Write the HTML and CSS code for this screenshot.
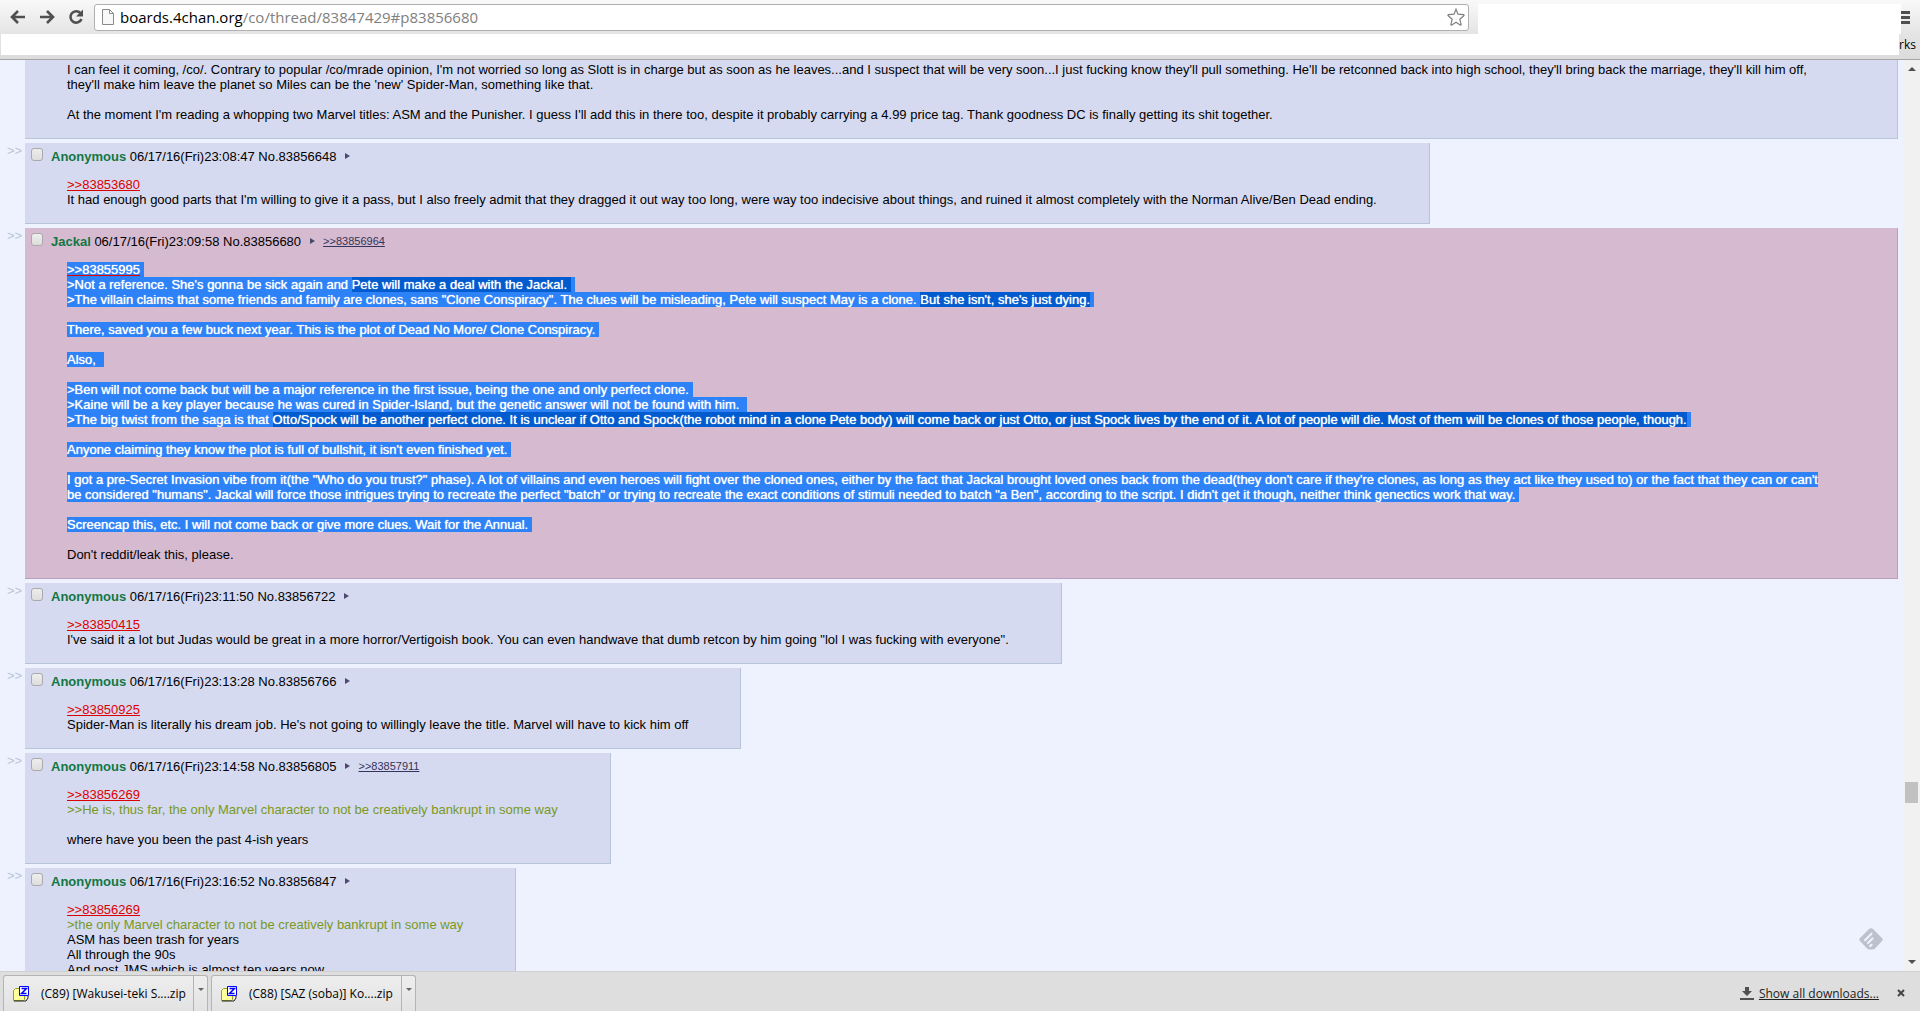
FILE: index.html
```html
<!DOCTYPE html>
<html lang="en">
  <head>
    <meta charset="UTF-8" />
    <meta name="viewport" content="width=device-width, initial-scale=1.0" />
    <title>/co/ - Thread 83847429</title>
    <link rel="stylesheet" href="styles.css">
  </head>
  <body>
    <header class="browser">
      <div class="toolbar">
        <button class="nav" aria-label="Back">
          <svg width="16" height="14" viewBox="0 0 16 14"><path d="M8 1 2 7l6 6M2.500 7H15" fill="none" stroke="#505050" stroke-width="2.600" /></svg>
        </button>
        <button class="nav" aria-label="Forward">
          <svg width="16" height="14" viewBox="0 0 16 14"><path d="M8 1l6 6-6 6M13.500 7H1" fill="none" stroke="#505050" stroke-width="2.600" /></svg>
        </button>
        <button class="nav" aria-label="Reload">
          <svg width="16" height="16" viewBox="0 0 16 16"><path d="M12.500 4.200A5.700 5.700 0 1 0 13.500 10" fill="none" stroke="#505050" stroke-width="2.600" /><path d="M15 .5v7H8z" fill="#505050" /></svg>
        </button>
        <div class="address">
          <svg width="12" height="16" viewBox="0 0 12 16"><path d="M.5.5h7l4 4v11H.5zM7.500.5v4h4" fill="#f8f8f8" stroke="#8a8a8a" /></svg>
          <a class="url" href="#p83856680">boards.4chan.org<span>/co/thread/83847429#p83856680</span></a>
          <button class="star" aria-label="Bookmark">
            <svg width="18" height="18" viewBox="0 0 18 18"><path d="M9 1.200l2 5 5.400.5c.7.1.9.6.4 1.100l-4 3.500 1.300 5c.1.600-.3.900-.9.600L9 14.200 4.800 16.900c-.6.3-1 0-.9-.6l1.300-5-4-3.500c-.5-.5-.3-1 .4-1.100L7 6.200z" fill="#fff" stroke="#808080" stroke-width="1.200" /></svg>
          </button>
        </div>
        <div class="blank"></div>
        <button class="menu" aria-label="Menu"><i></i><i></i><i></i></button>
      </div>
      <div class="bookmarks">
        <div class="blank"></div>
        <span>rks</span>
      </div>
    </header>

    <div class="view">
      <main class="thread">
        <div class="row">
          <span class="arrows"></span>
          <article class="post wide cut">
            <blockquote>
              I can feel it coming, /co/. Contrary to popular /co/mrade opinion, I'm not worried so long as Slott is in charge but as soon as he leaves...and I suspect that will be very soon...I just fucking know they'll pull something. He'll be retconned back into high school, they'll bring back the marriage, they'll kill him off,<br>
              they'll make him leave the planet so Miles can be the 'new' Spider-Man, something like that.<br><br>
              At the moment I'm reading a whopping two Marvel titles: ASM and the Punisher. I guess I'll add this in there too, despite it probably carrying a 4.99 price tag. Thank goodness DC is finally getting its shit together.
            </blockquote>
          </article>
        </div>

        <div class="row">
          <span class="arrows">&gt;&gt;</span>
          <article class="post">
            <div class="info">
              <input type="checkbox" id="c83856648" />
              <label for="c83856648"><b>Anonymous</b> 06/17/16(Fri)23:08:47 No.83856648</label>
              <button class="tri" aria-label="Post menu"></button>
            </div>
            <blockquote>
              <a href="#p83853680">&gt;&gt;83853680</a><br>
              It had enough good parts that I'm willing to give it a pass, but I also freely admit that they dragged it out way too long, were way too indecisive about things, and ruined it almost completely with the Norman Alive/Ben Dead ending.
            </blockquote>
          </article>
        </div>

        <div class="row">
          <span class="arrows">&gt;&gt;</span>
          <article class="post wide highlight" id="p83856680">
            <div class="info">
              <input type="checkbox" id="c83856680" />
              <label for="c83856680"><b>Jackal</b> 06/17/16(Fri)23:09:58 No.83856680</label>
              <button class="tri" aria-label="Post menu"></button>
              <a class="backlink" href="#p83856964">&gt;&gt;83856964</a>
            </div>
            <blockquote>
              <mark><a href="#p83855995">&gt;&gt;83855995</a></mark><br>
              <mark>&gt;Not a reference. She's gonna be sick again and <em>Pete will make a deal with the Jackal.&nbsp;</em></mark><br>
              <mark>&gt;The villain claims that some friends and family are clones, sans "Clone Conspiracy". The clues will be misleading, Pete will suspect May is a clone. <em>But she isn't, she's just dying.</em></mark><br><br>
              <mark>There, saved you a few buck next year. This is the plot of Dead No More/ Clone Conspiracy.</mark><br><br>
              <mark>Also,&nbsp;</mark><br><br>
              <mark>&gt;Ben will not come back but will be a major reference in the first issue, being the one and only perfect clone.</mark><br>
              <mark>&gt;Kaine will be a key player because he was cured in Spider-Island, but the genetic answer will not be found with him.&nbsp;</mark><br>
              <mark>&gt;The big twist from the saga is that <em>Otto/Spock will be another perfect clone. It is unclear if Otto and Spock(the robot mind in a clone Pete body) will come back or just Otto, or just Spock lives by the end of it. A lot of people will die. Most of them will be clones of those people, though.</em></mark><br><br>
              <mark>Anyone claiming they know the plot is full of bullshit, it isn't even finished yet.</mark><br><br>
              <mark>I got a pre-Secret Invasion vibe from it(the "Who do you trust?" phase). A lot of villains and even heroes will fight over the cloned ones, either by the fact that Jackal brought loved ones back from the dead(they don't care if they're clones, as long as they act like they used to) or the fact that they can or can't<br>
              be considered "humans". Jackal will force those intrigues trying to recreate the perfect "batch" or trying to recreate the exact conditions of stimuli needed to batch "a Ben", according to the script. I didn't get it though, neither think genectics work that way.</mark><br><br>
              <mark>Screencap this, etc. I will not come back or give more clues. Wait for the Annual.</mark><br><br>
              Don't reddit/leak this, please.
            </blockquote>
          </article>
        </div>

        <div class="row">
          <span class="arrows">&gt;&gt;</span>
          <article class="post">
            <div class="info">
              <input type="checkbox" id="c83856722" />
              <label for="c83856722"><b>Anonymous</b> 06/17/16(Fri)23:11:50 No.83856722</label>
              <button class="tri" aria-label="Post menu"></button>
            </div>
            <blockquote>
              <a href="#p83850415">&gt;&gt;83850415</a><br>
              I've said it a lot but Judas would be great in a more horror/Vertigoish book. You can even handwave that dumb retcon by him going "lol I was fucking with everyone".
            </blockquote>
          </article>
        </div>

        <div class="row">
          <span class="arrows">&gt;&gt;</span>
          <article class="post">
            <div class="info">
              <input type="checkbox" id="c83856766" />
              <label for="c83856766"><b>Anonymous</b> 06/17/16(Fri)23:13:28 No.83856766</label>
              <button class="tri" aria-label="Post menu"></button>
            </div>
            <blockquote>
              <a href="#p83850925">&gt;&gt;83850925</a><br>
              Spider-Man is literally his dream job. He's not going to willingly leave the title. Marvel will have to kick him off
            </blockquote>
          </article>
        </div>

        <div class="row">
          <span class="arrows">&gt;&gt;</span>
          <article class="post">
            <div class="info">
              <input type="checkbox" id="c83856805" />
              <label for="c83856805"><b>Anonymous</b> 06/17/16(Fri)23:14:58 No.83856805</label>
              <button class="tri" aria-label="Post menu"></button>
              <a class="backlink" href="#p83857911">&gt;&gt;83857911</a>
            </div>
            <blockquote>
              <a href="#p83856269">&gt;&gt;83856269</a><br>
              <span class="quote">&gt;&gt;He is, thus far, the only Marvel character to not be creatively bankrupt in some way</span><br><br>
              where have you been the past 4-ish years
            </blockquote>
          </article>
        </div>

        <div class="row">
          <span class="arrows">&gt;&gt;</span>
          <article class="post">
            <div class="info">
              <input type="checkbox" id="c83856847" />
              <label for="c83856847"><b>Anonymous</b> 06/17/16(Fri)23:16:52 No.83856847</label>
              <button class="tri" aria-label="Post menu"></button>
            </div>
            <blockquote>
              <a href="#p83856269">&gt;&gt;83856269</a><br>
              <span class="quote">&gt;the only Marvel character to not be creatively bankrupt in some way</span><br>
              ASM has been trash for years<br>
              All through the 90s<br>
              And post JMS which is almost ten years now
            </blockquote>
          </article>
        </div>
      </main>

      <div class="scrollbar">
        <button class="up" aria-label="Scroll up"></button>
        <div class="track"><div class="thumb"></div></div>
        <button class="down" aria-label="Scroll down"></button>
      </div>

      <button class="feedly" aria-label="Feedly">
        <svg width="24" height="22" viewBox="0 0 24 22"><path d="M10 1q2-1.600 4 0l9 9q1.500 1.500 0 3l-7 7.500q-1 1-2.500 1h-3q-1.500 0-2.500-1L1 13q-1.500-1.500 0-3z" fill="#bdc0cd" /><path d="M6 12.200l6.500-6.500M9 15l4.500-4.500M11.300 18l1.200-1.200" stroke="#eef2ff" stroke-width="2.200" stroke-linecap="round" /></svg>
      </button>
    </div>

    <footer class="downloads">
      <div class="item">
        <button class="file">
          <svg width="17" height="16" viewBox="0 0 17 16"><path d="M.5 4.500l2-2h4v2h5v9l-1 1H.5z" fill="#ffff9c" stroke="#9c9c31" /><path d="M1 15h12l2-3v-2" fill="none" stroke="#222" /><path d="M6.500.5h9v9h-9z" fill="#fff" stroke="#00f" /><path d="M8.500 2.500h5l-5 5h5" fill="none" stroke="#00f" stroke-width="1.500" /></svg>
          (C89) [Wakusei-teki S....zip
        </button>
        <button class="more" aria-label="Options"></button>
      </div>
      <div class="item">
        <button class="file">
          <svg width="17" height="16" viewBox="0 0 17 16"><path d="M.5 4.500l2-2h4v2h5v9l-1 1H.5z" fill="#ffff9c" stroke="#9c9c31" /><path d="M1 15h12l2-3v-2" fill="none" stroke="#222" /><path d="M6.500.5h9v9h-9z" fill="#fff" stroke="#00f" /><path d="M8.500 2.500h5l-5 5h5" fill="none" stroke="#00f" stroke-width="1.500" /></svg>
          (C88) [SAZ (soba)] Ko....zip
        </button>
        <button class="more" aria-label="Options"></button>
      </div>
      <div class="all">
        <svg width="14" height="13" viewBox="0 0 14 13"><path d="M5 0h4v4h3L7 9 2 4h3zM0 11h14v2H0z" fill="#505050" /></svg>
        <a href="#downloads">Show all downloads...</a>
        <button class="close" aria-label="Close">
          <svg width="8" height="8" viewBox="0 0 8 8"><path d="M1 1l6 6M7 1 1 7" stroke="#444" stroke-width="2" /></svg>
        </button>
      </div>
    </footer>
  </body>
</html>
```
FILE: styles.css
```css
* {
  box-sizing: border-box;
}
body {
  margin: 0;
  height: 100vh;
  display: flex;
  flex-direction: column;
  overflow: hidden;
  background-color: #eef2ff;
  font-family: "Liberation Sans", Arial, sans-serif;
  font-size: 13px;
  line-height: 15px;
  color: #000;
}
button {
  padding: 0;
  border: 0;
  background: none;
  font: inherit;
  color: inherit;
}
svg {
  display: block;
  flex: none;
}

/* browser chrome */
.browser {
  flex: none;
  height: 60px;
  background: linear-gradient(#f9f9f9, #e4e4e4 34px, #dcdcdc);
  border-bottom: 1px solid #a5a5a5;
  font-family: "Open Sans", "Noto Sans", sans-serif;
}
.toolbar {
  display: flex;
  align-items: center;
  height: 34px;
  padding-left: 10px;
}
.nav {
  width: 16px;
  margin-right: 13px;
}
.address {
  flex: 1;
  display: flex;
  align-items: center;
  height: 27px;
  margin: 0 9px 0 -3px;
  padding: 0 3px 0 7px;
  background-color: #fff;
  border: 1px solid #b0b0b0;
  border-radius: 3px;
}
.url {
  flex: 1;
  margin-left: 6px;
  font-size: 15px;
  color: #000;
  text-decoration: none;
}
.url span {
  color: #808080;
}
.blank {
  background-color: #fff;
}
.toolbar .blank {
  width: 423px;
  height: 30px;
  align-self: flex-end;
}
.menu {
  width: 19px;
}
.menu i {
  display: block;
  width: 9px;
  height: 3px;
  margin: 2px 0;
  background-color: #505050;
}
.bookmarks {
  display: flex;
  height: 21px;
  padding-left: 1px;
  font-size: 12px;
  line-height: 21px;
}
.bookmarks .blank {
  flex: 1;
}
.bookmarks span {
  width: 21px;
}

/* thread */
.view {
  position: relative;
  flex: 1;
  min-height: 0;
  display: flex;
}
.thread {
  flex: 1;
  overflow: hidden;
}
.row {
  display: flex;
  align-items: flex-start;
  margin-bottom: 4px;
  padding-right: 5px;
}
.arrows {
  flex: none;
  width: 25px;
  padding-left: 7px;
  color: #b7c5d9;
}
.post {
  padding: 2px;
  background-color: #d6daf0;
  border: 1px solid #b7c5d9;
  border-width: 0 1px 1px 0;
}
.wide {
  flex: 1;
}
.highlight {
  background-color: #d6bad0;
  border-color: #ba9dbf;
}
.info {
  display: flex;
  align-items: center;
  height: 22px;
  padding-left: 4px;
}
.info input {
  appearance: none;
  align-self: flex-start;
  width: 12px;
  height: 13px;
  margin: 3px 8px 0 0;
  background: linear-gradient(#eee, #ddd);
  border: 1px solid #aaa;
  border-radius: 3px;
}
.info b {
  color: #117743;
}
.tri {
  margin-left: 9px;
  border: 3px solid transparent;
  border-left: 5px solid #4a4a70;
  border-right: 0;
}
.backlink {
  margin-left: 8px;
  font-size: 11px;
  color: #34345c;
}
blockquote {
  margin: 10px 50px 14px 40px;
}
.cut blockquote {
  margin-top: 0;
}
blockquote a {
  color: #d00;
}
.quote {
  color: #789922;
}
mark {
  padding-right: 4px;
  background-color: #2d82f8;
  color: #fff;
  text-shadow: 0 0 1px #fff;
}
mark a {
  color: #fff;
  text-decoration-color: #d00;
}
mark em {
  font-style: normal;
  background-color: #005bce;
}

.scrollbar {
  flex: none;
  display: flex;
  flex-direction: column;
  align-items: center;
  width: 17px;
  background-color: #f1f1f1;
}
.up,
.down {
  width: 8px;
  height: 4px;
  margin: 7px 0;
  border: 4px solid transparent;
}
.up {
  border-top: 0;
  border-bottom-color: #505050;
}
.down {
  border-bottom: 0;
  border-top-color: #505050;
}
.track {
  flex: 1;
  display: flex;
  flex-direction: column;
  justify-content: flex-end;
  padding-bottom: 150px;
}
.thumb {
  width: 13px;
  height: 21px;
  background-color: #c1c1c1;
}
.feedly {
  position: absolute;
  right: 37px;
  bottom: 21px;
}

/* downloads */
.downloads {
  flex: none;
  display: flex;
  gap: 3px;
  height: 40px;
  padding: 3px 15px 0 3px;
  background-color: #dedede;
  border-top: 1px solid #cfcfcf;
  font-family: "Open Sans", "Noto Sans", sans-serif;
  font-size: 12px;
}
.item {
  display: flex;
  width: 205px;
  background: linear-gradient(#eee, #e2e2e2);
  border: 1px solid #b4b4b4;
  border-bottom: 0;
  border-radius: 3px 3px 0 0;
}
.file {
  flex: 1;
  display: flex;
  align-items: center;
  gap: 11px;
  padding-left: 9px;
  white-space: nowrap;
}
.more {
  width: 14px;
  padding: 12px 4px;
  border-left: 1px solid #b4b4b4;
}
.more::before {
  content: "";
  display: block;
  margin-bottom: 10px;
  border: 3px solid transparent;
  border-top-color: #666;
  border-bottom: 0;
}
.all {
  display: flex;
  align-items: center;
  margin-left: auto;
}
.all a {
  margin: 0 18px 0 5px;
  color: #222;
}
```
